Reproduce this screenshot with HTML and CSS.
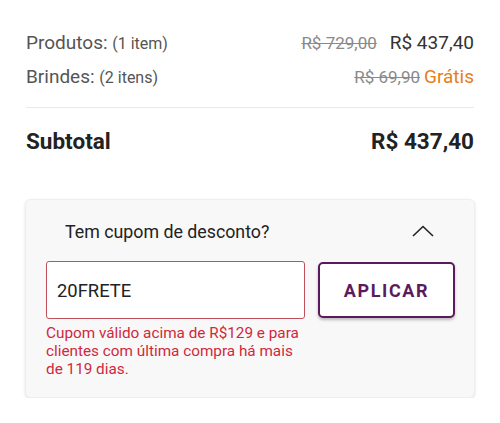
FILE: index.html
```html
<!DOCTYPE html>
<html lang="pt-BR">
<head>
    <meta charset="UTF-8">
    <meta name="viewport" content="width=device-width, initial-scale=1.0">
    <title>Resumo do pedido</title>
    <link rel="stylesheet" href="styles.css">
</head>
<body>
    <div class="summary">
        <div class="row">
            <span class="label">Produtos: <small>(1 item)</small></span>
            <span class="values"><s class="old">R$ 729,00</s><span class="price">R$ 437,40</span></span>
        </div>
        <div class="row">
            <span class="label">Brindes: <small>(2 itens)</small></span>
            <span class="values tight"><s class="old">R$ 69,90</s><span class="free">Grátis</span></span>
        </div>
        <div class="subtotal">
            <span>Subtotal</span>
            <span>R$ 437,40</span>
        </div>
    </div>

    <div class="coupon">
        <div class="coupon-head">
            <span>Tem cupom de desconto?</span>
            <svg class="chevron" width="22" height="12" viewBox="0 0 22 12">
                <path d="M1 11 L11 1.5 L21 11" fill="none" stroke="#222" stroke-width="1.6"/>
            </svg>
        </div>
        <div class="coupon-form">
            <div class="field">
                <input class="coupon-input" type="text" value="20FRETE">
                <p class="error">Cupom válido acima de R$129 e para clientes com última compra há mais de 119 dias.</p>
            </div>
            <button class="apply">APLICAR</button>
        </div>
    </div>
</body>
</html>
```

FILE: styles.css
```css
* {
    margin: 0px;
    padding: 0px;
    box-sizing: border-box;
}

body {
    width: 500px;
    padding: 25px 26px 0;
    font-family: Roboto, "Liberation Sans", sans-serif;
    background: #fff;
    color: #222;
}

.row {
    display: flex;
    justify-content: space-between;
    align-items: center;
    height: 34px;
}

.label {
    font-size: 19px;
    color: #555;
}

.label small {
    font-size: 16px;
}

.values {
    display: flex;
    align-items: baseline;
    gap: 13px;
}

.values.tight {
    gap: 4px;
}

.old {
    font-size: 17px;
    color: #8a8a8a;
}

.price {
    font-size: 19px;
    color: #333;
}

.free {
    font-size: 19px;
    color: #e67e22;
}

.subtotal {
    display: flex;
    justify-content: space-between;
    align-items: center;
    margin-top: 14px;
    border-top: 1px solid #e9e9e9;
    height: 67px;
    font-size: 22.5px;
    font-weight: 700;
    color: #222;
}

.coupon {
    margin: 25px -1px 0;
    padding: 14px 19px 19px 20px;
    background: #f8f8f8;
    border: 1px solid #efefef;
    border-radius: 6px;
    box-shadow: 0 1px 3px rgba(0, 0, 0, 0.12);
}

.coupon-head {
    display: flex;
    justify-content: space-between;
    align-items: center;
    height: 34px;
    padding: 0 21px 0 19px;
    font-size: 17.8px;
    color: #222;
}

.coupon-form {
    display: flex;
    align-items: flex-start;
    gap: 13px;
    margin-top: 13px;
}

.field {
    flex: 1;
}

.coupon-input {
    width: 100%;
    height: 58px;
    padding: 0 10px;
    border: 1px solid #c0505c;
    border-radius: 3px;
    background: #fff;
    font-family: inherit;
    font-size: 18.4px;
    color: #222;
    outline: none;
}

.error {
    margin-top: 5px;
    font-size: 15.3px;
    line-height: 18px;
    color: #d0283c;
}

.apply {
    width: 137px;
    height: 56px;
    margin-top: 1px;
    border: 2.5px solid #5c1a5e;
    border-radius: 5px;
    background: #fff;
    box-shadow: 0 2px 3px rgba(0, 0, 0, 0.25);
    font-family: inherit;
    font-size: 18px;
    font-weight: 700;
    letter-spacing: 1.6px;
    color: #5c1a5e;
}
```
